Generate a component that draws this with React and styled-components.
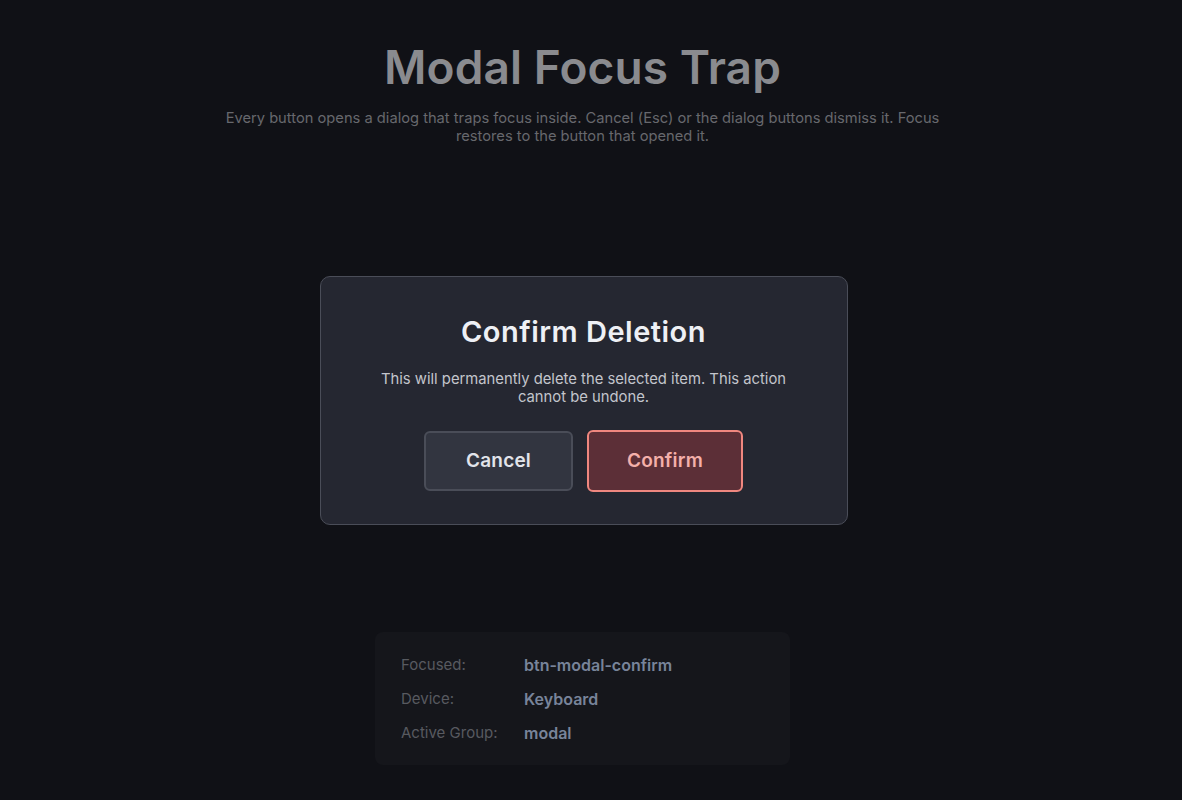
import React from 'react';
import styled, { createGlobalStyle } from 'styled-components';

const GlobalStyle = createGlobalStyle`
  html, body {
    margin: 0;
    padding: 0;
    background: #101116;
  }
  body {
    font-family: Inter, "Noto Sans", sans-serif;
    padding-right: 17px; /* scrollbar compensation while the modal is open */
    overflow: hidden;
  }
  * { box-sizing: border-box; }
`;

const Page = styled.main`
  min-height: 800px;
  display: flex;
  flex-direction: column;
  align-items: center;
  padding: 40px 24px 40px;
`;

const Title = styled.h1`
  margin: 0;
  font-size: 46px;
  font-weight: 600;
  line-height: 1.2;
  letter-spacing: 0.1px;
  color: #8a8b8f;
`;

const Subtitle = styled.p`
  margin: 14px 0 0;
  max-width: 730px;
  text-align: center;
  font-size: 14.7px;
  line-height: 18px;
  color: #67686d;
`;

const Spacer = styled.div`
  height: 487px;
`;

const StatusPanel = styled.section`
  width: 415px;
  padding: 24px 26px 23px;
  background: #15161b;
  border-radius: 8px;
  display: grid;
  grid-template-columns: 123px 1fr;
  row-gap: 16px;
  align-items: center;
`;

const Label = styled.span`
  font-size: 15px;
  line-height: 18px;
  color: #585a60;
`;

const Value = styled.span`
  font-size: 16px;
  line-height: 18px;
  font-weight: 600;
  color: #78849a;
`;

const Overlay = styled.div`
  position: fixed;
  inset: 0;
  padding-right: 15px;
  display: flex;
  align-items: center;
  justify-content: center;
`;

const Dialog = styled.div`
  width: 528px;
  padding: 37px 40px 32px;
  background: #252731;
  border: 1px solid #4a4d58;
  border-radius: 10px;
  display: flex;
  flex-direction: column;
  align-items: center;
  text-align: center;
`;

const DialogTitle = styled.h2`
  margin: 0;
  font-size: 29px;
  line-height: 36px;
  font-weight: 600;
  letter-spacing: 0.5px;
  color: #eef0f5;
`;

const DialogText = styled.p`
  margin: 20px 0 0;
  font-size: 14.8px;
  line-height: 18px;
  color: #c3c5cc;
`;

const Actions = styled.div`
  margin-top: 24px;
  display: flex;
  align-items: center;
  gap: 14px;
`;

const Button = styled.button`
  font-family: inherit;
  font-size: 19px;
  font-weight: 600;
  letter-spacing: 0.2px;
  border-radius: 6px;
  border: 2px solid ${p => (p.$danger ? '#f0877f' : '#4a4d58')};
  background: ${p => (p.$danger ? '#5c2f37' : '#323540')};
  color: ${p => (p.$danger ? '#f4b0aa' : '#e2e4ea')};
  height: ${p => (p.$danger ? '62px' : '60px')};
  padding: 0 ${p => (p.$danger ? '38px' : '40px')};
  cursor: pointer;
`;

const rows = [
  ['Focused:', 'btn-modal-confirm'],
  ['Device:', 'Keyboard'],
  ['Active Group:', 'modal'],
];

export default function App() {
  return (
    <>
      <GlobalStyle />
      <Page>
        <Title>Modal Focus Trap</Title>
        <Subtitle>
          Every button opens a dialog that traps focus inside. Cancel (Esc) or the dialog buttons dismiss it. Focus
          restores to the button that opened it.
        </Subtitle>
        <Spacer />
        <StatusPanel>
          {rows.map(([k, v]) => (
            <React.Fragment key={k}>
              <Label>{k}</Label>
              <Value>{v}</Value>
            </React.Fragment>
          ))}
        </StatusPanel>
      </Page>
      <Overlay>
        <Dialog role="dialog" aria-modal="true">
          <DialogTitle>Confirm Deletion</DialogTitle>
          <DialogText>
            This will permanently delete the selected item. This action cannot be undone.
          </DialogText>
          <Actions>
            <Button>Cancel</Button>
            <Button $danger>Confirm</Button>
          </Actions>
        </Dialog>
      </Overlay>
    </>
  );
}
